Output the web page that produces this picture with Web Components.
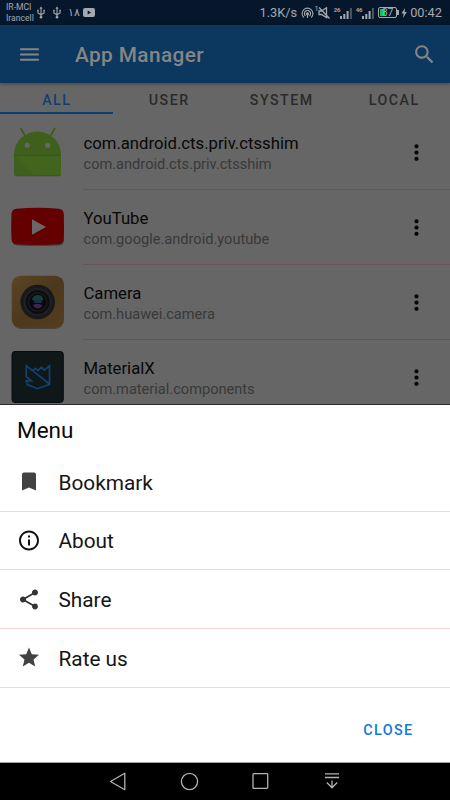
<!DOCTYPE html>
<html lang="en">
<head>
<meta charset="utf-8">
<meta name="viewport" content="width=device-width, initial-scale=1">
<title>App Manager</title>
<style>
  html, body {
    margin: 0;
    height: 100%;
    overflow: hidden;
    background: #666;
    font-family: Roboto, "Noto Sans", sans-serif;
  }
</style>
</head>
<body>
<app-screen>
  <status-bar slot="top"></status-bar>
  <app-toolbar slot="top">App Manager</app-toolbar>
  <app-tabs slot="top">
    <app-tab active>ALL</app-tab>
    <app-tab>USER</app-tab>
    <app-tab>SYSTEM</app-tab>
    <app-tab>LOCAL</app-tab>
  </app-tabs>

  <app-row name="com.android.cts.priv.ctsshim" package="com.android.cts.priv.ctsshim">
    <svg width="56" height="56" viewBox="0 0 56 56">
      <path d="M10.800 4.500L14.600 11M44.700 4.500L40.900 11" stroke="#3c5a1b" stroke-width="1.700" stroke-linecap="round"/>
      <path d="M5.500 51.300H49.500" stroke="#4a4d46" stroke-width="2" stroke-linecap="round"/>
      <path d="M4 31C4 18 14 7.800 27.500 7.800S51 18 51 31V49Q51 51 49 51H6Q4 51 4 49Z" fill="#3f601d"/>
      <path d="M4 31H51V49Q51 51 49 51H24Z" fill="#42651e"/>
      <path d="M4 31.300H51" stroke="#36541a" stroke-width="1"/>
      <circle cx="17.300" cy="21.300" r="2.600" fill="#666"/>
      <circle cx="37.700" cy="21.300" r="2.600" fill="#666"/>
    </svg>
  </app-row>
  <app-row name="YouTube" package="com.google.android.youtube">
    <svg width="56" height="56" viewBox="0 0 56 56">
      <path d="M6 11Q28 7 49 11Q54 11.500 54 17V41Q54 46 49 46.500Q28 47.500 7 46.500Q2 46 2 41V17Q2 11.500 6 11Z" fill="#424242"/>
      <path d="M6.500 9.700Q28 8 48.500 9.700Q53.500 10 53.700 15Q54.300 28 53.700 40Q53.500 45 48.500 45.300Q28 46.700 6.500 45.300Q1.800 45 1.500 40Q.8 28 1.500 15Q1.800 10 6.500 9.700Z" fill="#640000"/>
      <path d="M22 20.300V35.800L36 28Z" fill="#686868"/>
    </svg>
  </app-row>
  <app-row name="Camera" package="com.huawei.camera">
    <svg width="56" height="56" viewBox="0 0 56 56">
      <defs>
        <linearGradient id="wood" x1="0" y1="0" x2="1" y2="1">
          <stop offset="0" stop-color="#5b4525"/>
          <stop offset=".5" stop-color="#4c381d"/>
          <stop offset="1" stop-color="#543e20"/>
        </linearGradient>
      </defs>
      <rect x="2" y="3" width="52" height="52" rx="9" fill="#494642"/>
      <rect x="1.700" y="1.700" width="52.300" height="52" rx="9" fill="url(#wood)"/>
      <circle cx="27.700" cy="28" r="17.300" fill="#18191b"/>
      <circle cx="27.700" cy="28" r="14" fill="#202124"/>
      <circle cx="27.700" cy="28" r="12" fill="#0b0d10"/>
      <circle cx="27.700" cy="28" r="10" fill="#17181c"/>
      <circle cx="27.700" cy="28" r="8.300" fill="#08080c"/>
      <path d="M22 26Q23 21 28 21Q33 21 33.500 26Q28 28.500 22 26Z" fill="#163c36"/>
      <path d="M23 28Q28 25.500 33 28L31 29H25Z" fill="#1b2d4c"/>
      <path d="M23 31Q28 28.500 32.500 31.500Q31 34.500 27.500 34.500Q24.500 34.500 23 31Z" fill="#40224a"/>
    </svg>
  </app-row>
  <app-row name="MaterialX" package="com.material.components">
    <svg width="56" height="56" viewBox="0 0 56 56">
      <rect x="2" y="2.500" width="51.300" height="51" rx="3" fill="#0f1719" stroke="#080d0f"/>
      <path d="M16.200 16.800L22.700 21.700L25.500 19.300L28 21.500L31.500 18.300L34.300 21.200L39.500 16.800V35.300L27.500 39.700L17.300 35.500L16.200 31.800H21.500L16.200 27.500ZM22.700 21.700L39.300 35" fill="none" stroke="#12416f" stroke-width="1.700"/>
    </svg>
  </app-row>

  <bottom-sheet slot="bottom" heading="Menu">
    <menu-item label="Bookmark">
      <svg width="25" height="25" viewBox="0 0 24 24" fill="#424242"><path d="M17 3H7c-1.100 0-1.990.9-1.990 2L5 21l7-3 7 3V5c0-1.100-.9-2-2-2z"/></svg>
    </menu-item>
    <menu-item label="About">
      <svg width="25" height="25" viewBox="0 0 24 24" fill="#111"><path d="M11 7h2v2h-2zm0 4h2v6h-2zm1-9C6.480 2 2 6.480 2 12s4.480 10 10 10 10-4.480 10-10S17.520 2 12 2zm0 18c-4.410 0-8-3.590-8-8s3.590-8 8-8 8 3.590 8 8-3.590 8-8 8z"/></svg>
    </menu-item>
    <menu-item label="Share">
      <svg width="25" height="25" viewBox="0 0 24 24" fill="#333"><path d="M18 16.080c-.76 0-1.440.3-1.960.77L8.910 12.700c.05-.23.09-.46.09-.7s-.04-.47-.09-.7l7.050-4.110c.54.5 1.250.81 2.040.81 1.660 0 3-1.340 3-3s-1.340-3-3-3-3 1.340-3 3c0 .24.04.47.09.7L8.040 9.810C7.500 9.310 6.790 9 6 9c-1.660 0-3 1.340-3 3s1.340 3 3 3c.79 0 1.500-.31 2.040-.81l7.120 4.160c-.05.21-.08.43-.08.65 0 1.610 1.310 2.920 2.920 2.920s2.920-1.310 2.920-2.920-1.310-2.920-2.920-2.920z"/></svg>
    </menu-item>
    <menu-item label="Rate us">
      <svg width="25" height="25" viewBox="0 0 24 24" fill="#424242"><path d="M12 17.270L18.180 21l-1.640-7.030L22 9.240l-7.190-.61L12 2 9.190 8.630 2 9.240l5.460 4.730L5.820 21z"/></svg>
    </menu-item>
    <span slot="action">CLOSE</span>
  </bottom-sheet>
  <nav-bar slot="bottom"></nav-bar>
</app-screen>

<script>
class AppScreen extends HTMLElement {
  constructor() {
    super();
    this.attachShadow({ mode: 'open' });
  }

  connectedCallback() {
    this.shadowRoot.innerHTML = `
      <style>
        :host {
          display: flex;
          flex-direction: column;
          width: 450px;
          height: 800px;
          overflow: hidden;
          background: #666;
        }
        .list {
          flex: 1;
          min-height: 0;
          overflow: hidden;
        }
      </style>
      <slot name="top"></slot>
      <div class="list"><slot></slot></div>
      <slot name="bottom"></slot>
    `;
  }
}

class StatusBar extends HTMLElement {
  constructor() {
    super();
    this.attachShadow({ mode: 'open' });
  }

  connectedCallback() {
    const usb = `
      <svg class="usb" width="10" height="13" viewBox="0 0 10 14" fill="none" stroke="#9fa5ad" stroke-width="1.200">
        <path d="M5 2V12M1.700 5V7.500L5 9.500L8.300 7.500V5"/>
        <path d="M3.300 3L5 .5L6.700 3ZM.9 4h1.600v1.600H.9zM7.500 4h1.600v1.600H7.500z" fill="#9fa5ad" stroke="none"/>
        <circle cx="5" cy="12" r="1.400" fill="#9fa5ad" stroke="none"/>
      </svg>`;
    const bars = `
      <svg width="12" height="12" viewBox="0 0 12 12" fill="#a4a9b0">
        <path d="M0 9h2v3H0zM3.300 7h2v5h-2zM6.600 4h2v8h-2z"/>
        <path d="M9.900 1h2v11h-2z" fill="#4b5665"/>
      </svg>`;

    this.shadowRoot.innerHTML = `
      <style>
        :host {
          display: flex;
          align-items: center;
          justify-content: space-between;
          flex: none;
          height: 25px;
          padding: 0 8px 0 6px;
          box-sizing: border-box;
          background: #06172b;
          color: #a4a9b0;
          font-size: 12.800px;
          line-height: 16px;
        }
        svg { display: block; flex: none; }
        .left, .right { display: flex; align-items: center; }
        .carriers { width: 30px; font-size: 8.600px; line-height: 11px; padding-top: 1px; white-space: nowrap; }
        .usb { margin-right: 6px; }
        .count { font-size: 10.500px; width: 15px; }
        .signal { display: flex; align-items: flex-end; width: 18px; justify-content: flex-end; margin-right: 4px; }
        .net { font-size: 6px; line-height: 6px; font-weight: 700; align-self: flex-start; letter-spacing: -.3px; }
        .speed { margin-right: 4px; }
        .one { font-size: 8px; line-height: 8px; align-self: flex-start; width: 4px; }
        .battery {
          width: 19px;
          height: 11px;
          box-sizing: border-box;
          border: 1px solid #a4a9b0;
          border-radius: 2px;
          padding: 1px;
          background: linear-gradient(90deg, #08c84c 38%, transparent 38%);
          background-clip: content-box;
          font-size: 10.500px;
          line-height: 7px;
          text-align: center;
        }
        .nub { width: 2px; height: 5px; background: #a4a9b0; margin-right: 2px; }
        .time { margin-left: 3px; }
      </style>
      <div class="left">
        <div class="carriers"><div>IR-MCI</div><div>Irancell</div></div>
        ${usb}${usb}
        <span class="count">۱۸</span>
        <svg width="12" height="9" viewBox="0 0 12 9"><rect width="12" height="9" rx="2" fill="#a4a9b0"/><path d="M4.700 2.500V6.500L8 4.500Z" fill="#06172b"/></svg>
      </div>
      <div class="right">
        <span class="speed">1.3K/s</span>
        <svg width="13" height="12" viewBox="0 0 13 12" fill="none" stroke="#a4a9b0" stroke-width="1.100">
          <path d="M2.800 10.500A5.400 5.400 0 1 1 10.200 10.500M4.500 9A3.100 3.100 0 1 1 8.500 9"/>
          <circle cx="6.500" cy="6.700" r="1" fill="#a4a9b0"/><path d="M6.500 7V11"/>
        </svg>
        <span class="one">1</span>
        <svg width="12" height="12" viewBox="0 0 12 12" fill="none" stroke="#a4a9b0" stroke-width="1.300" style="margin-right:4px">
          <path d="M1 4H3.500L8.500 .8V10.500L3.500 7.500H1ZM1 .5L11.500 11.500"/>
        </svg>
        <div class="signal"><span class="net">26</span>${bars}</div>
        <div class="signal"><span class="net">46</span>${bars}</div>
        <div class="battery">87</div>
        <div class="nub"></div>
        <svg width="6" height="10" viewBox="0 0 6 10" fill="#a4a9b0"><path d="M4 0L.5 5.500H2.700L2 10L5.800 4H3.600Z"/></svg>
        <span class="time">00:42</span>
      </div>
    `;
  }
}

class AppToolbar extends HTMLElement {
  constructor() {
    super();
    this.attachShadow({ mode: 'open' });
  }

  connectedCallback() {
    this.shadowRoot.innerHTML = `
      <style>
        :host {
          display: flex;
          align-items: center;
          flex: none;
          height: 58px;
          padding: 0 13px 0 17px;
          box-sizing: border-box;
          background: #0c375e;
          color: #858585;
          box-shadow: 0 1px 3px rgba(0, 0, 0, .35);
          z-index: 1;
        }
        .title {
          flex: 1;
          margin-left: 33px;
          font-size: 20.800px;
          font-weight: 500;
          letter-spacing: .4px;
          padding-top: 2px;
        }
      </style>
      <svg width="25" height="25" viewBox="0 0 24 24" fill="#858585"><path d="M3 18h18v-2H3v2zm0-5h18v-2H3v2zm0-7v2h18V6H3z"/></svg>
      <span class="title"><slot></slot></span>
      <svg width="25" height="25" viewBox="0 0 24 24" fill="#858585"><path d="M15.500 14h-.79l-.28-.27C15.410 12.590 16 11.110 16 9.500 16 5.910 13.090 3 9.500 3S3 5.910 3 9.500 5.910 16 9.500 16c1.610 0 3.090-.59 4.230-1.570l.27.28v.79l5 4.990L20.490 19l-4.990-5zm-6 0C7.010 14 5 11.990 5 9.500S7.010 5 9.500 5 14 7.010 14 9.500 11.990 14 9.500 14z"/></svg>
    `;
  }
}

class AppTabs extends HTMLElement {
  constructor() {
    super();
    this.attachShadow({ mode: 'open' });
  }

  connectedCallback() {
    this.shadowRoot.innerHTML = `
      <style>
        :host {
          display: grid;
          grid-template-columns: repeat(4, 1fr);
          flex: none;
          height: 31px;
          margin-bottom: 1px;
          background: #666;
        }
      </style>
      <slot></slot>
    `;
  }
}

class AppTab extends HTMLElement {
  constructor() {
    super();
    this.attachShadow({ mode: 'open' });
  }

  connectedCallback() {
    this.shadowRoot.innerHTML = `
      <style>
        :host {
          display: flex;
          align-items: center;
          justify-content: center;
          box-sizing: border-box;
          border-bottom: 2px solid transparent;
          padding: 4px 0 0 1px;
          color: #2a2a2a;
          font-size: 14.200px;
          font-weight: 500;
          letter-spacing: 1.500px;
        }
        :host([active]) {
          color: #0d4072;
          border-bottom-color: #0d4072;
        }
      </style>
      <slot></slot>
    `;
  }
}

class AppRow extends HTMLElement {
  constructor() {
    super();
    this.attachShadow({ mode: 'open' });
  }

  connectedCallback() {
    this.shadowRoot.innerHTML = `
      <style>
        :host {
          display: flex;
          align-items: stretch;
          height: 75px;
        }
        .icon {
          width: 73px;
          padding: 9px 0 0 10px;
          box-sizing: border-box;
          margin-right: 10px;
        }
        .body {
          flex: 1;
          display: flex;
          align-items: center;
          border-bottom: 1px solid #6b5254;
          box-sizing: border-box;
        }
        .text { flex: 1; padding: 2px 0 0 .5px; }
        .name {
          color: #080808;
          font-size: 16.700px;
          line-height: 21px;
        }
        .package {
          color: #393939;
          font-size: 14.600px;
          line-height: 20px;
        }
        .more { margin-right: 21px; }
      </style>
      <div class="icon"><slot></slot></div>
      <div class="body">
        <div class="text">
          <div class="name">${this.getAttribute('name')}</div>
          <div class="package">${this.getAttribute('package')}</div>
        </div>
        <svg class="more" width="25" height="25" viewBox="0 0 24 24" fill="#050505"><path d="M12 8c1.100 0 2-.9 2-2s-.9-2-2-2-2 .9-2 2 .9 2 2 2zm0 2c-1.100 0-2 .9-2 2s.9 2 2 2 2-.9 2-2-.9-2-2-2zm0 6c-1.100 0-2 .9-2 2s.9 2 2 2 2-.9 2-2-.9-2-2-2z"/></svg>
      </div>
    `;
  }
}

class BottomSheet extends HTMLElement {
  constructor() {
    super();
    this.attachShadow({ mode: 'open' });
  }

  connectedCallback() {
    this.shadowRoot.innerHTML = `
      <style>
        :host {
          display: flex;
          flex-direction: column;
          flex: none;
          height: 358px;
          box-sizing: border-box;
          border-top: 1px solid #2b2b2b;
          background: #fff;
        }
        .heading {
          height: 48px;
          padding: 12px 17px 0;
          box-sizing: border-box;
          color: #0a0a0a;
          font-size: 22.500px;
          line-height: 27px;
        }
        .actions {
          flex: 1;
          display: flex;
          align-items: center;
          justify-content: flex-end;
          padding: 11px 36.500px 0 0;
          color: #1278e0;
          font-size: 14.400px;
          font-weight: 500;
          letter-spacing: 1.350px;
        }
      </style>
      <div class="heading">${this.getAttribute('heading')}</div>
      <slot></slot>
      <div class="actions"><slot name="action"></slot></div>
    `;
  }
}

class MenuItem extends HTMLElement {
  constructor() {
    super();
    this.attachShadow({ mode: 'open' });
  }

  connectedCallback() {
    this.shadowRoot.innerHTML = `
      <style>
        :host {
          display: flex;
          align-items: center;
          flex: none;
          height: 58.700px;
          box-sizing: border-box;
          border-bottom: 1px solid #fad4d4;
          color: #151515;
          font-size: 20.800px;
        }
        .icon {
          display: flex;
          justify-content: center;
          width: 24px;
          margin: 0 17.500px 0 17px;
        }
        .label { padding-top: 1.500px; }
      </style>
      <div class="icon"><slot></slot></div>
      <span class="label">${this.getAttribute('label')}</span>
    `;
  }
}

class NavBar extends HTMLElement {
  constructor() {
    super();
    this.attachShadow({ mode: 'open' });
  }

  connectedCallback() {
    this.shadowRoot.innerHTML = `
      <style>
        :host {
          display: grid;
          grid-template-columns: repeat(4, 71px);
          justify-content: center;
          align-items: center;
          justify-items: center;
          flex: none;
          height: 38px;
          box-sizing: border-box;
          border-top: 1px solid #a0a0a0;
          background: #000;
        }
        svg { display: block; fill: none; stroke: #b2b2b2; stroke-width: 1.300; }
      </style>
      <svg width="21" height="21" viewBox="-.5 -.5 21 21"><path d="M16.300 1.800V18.200L2 10Z" stroke-linejoin="round"/></svg>
      <svg width="21" height="21" viewBox="-.5 -.5 21 21"><circle cx="10" cy="10" r="8.100"/></svg>
      <svg width="21" height="21" viewBox="-.5 -.5 21 21"><rect x="2.500" y="2.200" width="14.700" height="14.700" rx=".8"/></svg>
      <svg width="21" height="21" viewBox="-.5 -.5 21 21"><path d="M3.500 2.300H17.500M3.500 6H17.500M10.500 9V16.500M5.300 11L10.500 16.300L15.700 11"/></svg>
    `;
  }
}

customElements.define('app-screen', AppScreen);
customElements.define('status-bar', StatusBar);
customElements.define('app-toolbar', AppToolbar);
customElements.define('app-tabs', AppTabs);
customElements.define('app-tab', AppTab);
customElements.define('app-row', AppRow);
customElements.define('bottom-sheet', BottomSheet);
customElements.define('menu-item', MenuItem);
customElements.define('nav-bar', NavBar);
</script>
</body>
</html>
